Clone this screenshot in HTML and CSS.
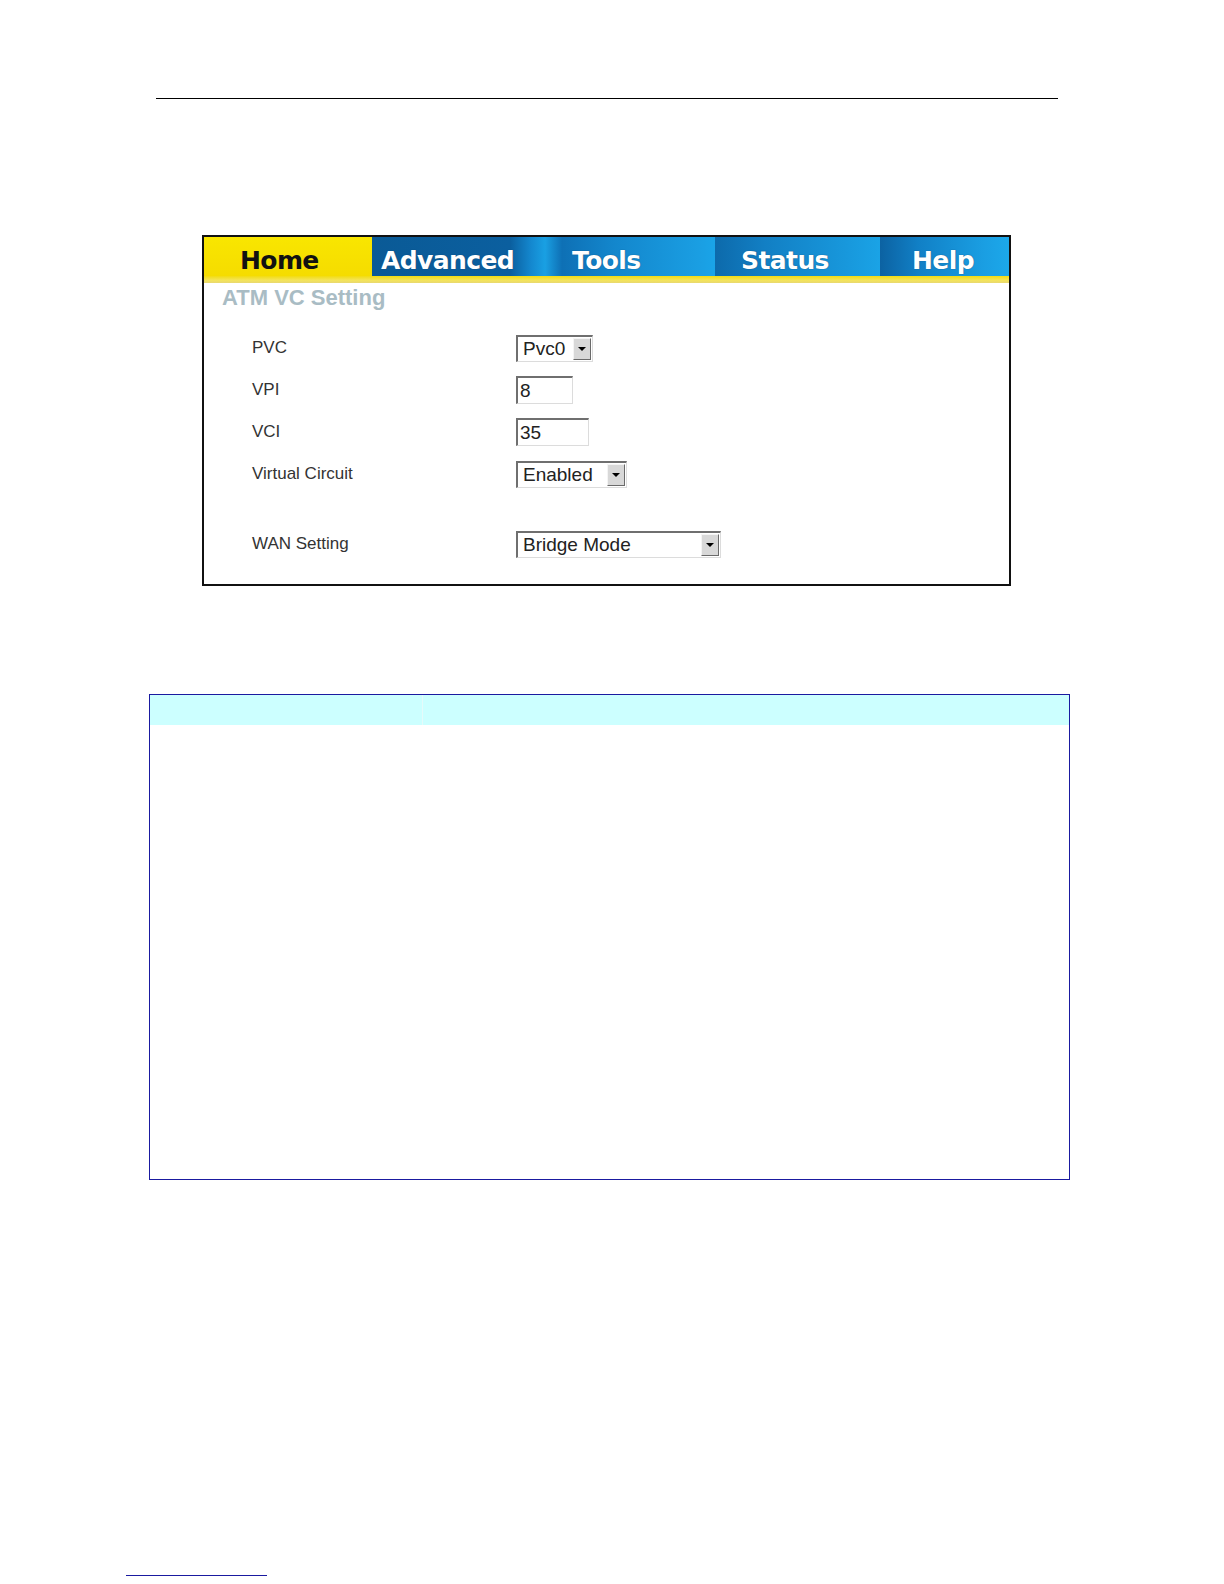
FILE: index.html
```html
<!DOCTYPE html>
<html>
<head>
<meta charset="utf-8">
<link rel="stylesheet" href="styles.css">
</head>
<body>
<div class="page">
  <div class="top-rule"></div>

  <div class="shot">
    <div class="tabbar">
      <div class="tab tab-home">Home</div>
      <div class="tab tab-adv">Advanced</div>
      <div class="tab tab-tools">Tools</div>
      <div class="tab tab-status">Status</div>
      <div class="tab tab-help">Help</div>
    </div>
    <div class="stripe"></div>
    <div class="content">
      <div class="title">ATM VC Setting</div>
      <div class="form">
        <div class="row">
          <div class="label">PVC</div>
          <div class="ctrl"><span class="select w-pvc"><span class="val">Pvc0</span><span class="arrow"></span></span></div>
        </div>
        <div class="row">
          <div class="label">VPI</div>
          <div class="ctrl"><span class="input w-vpi">8</span></div>
        </div>
        <div class="row">
          <div class="label">VCI</div>
          <div class="ctrl"><span class="input w-vci">35</span></div>
        </div>
        <div class="row">
          <div class="label">Virtual Circuit</div>
          <div class="ctrl"><span class="select w-vc"><span class="val">Enabled</span><span class="arrow"></span></span></div>
        </div>
        <div class="spacer"></div>
        <div class="row">
          <div class="label">WAN Setting</div>
          <div class="ctrl"><span class="select w-wan"><span class="val">Bridge Mode</span><span class="arrow"></span></span></div>
        </div>
      </div>
    </div>
  </div>

  <div class="table">
    <div class="thead">
      <div class="th th1"></div>
      <div class="th th2"></div>
    </div>
    <div class="tbody"></div>
  </div>

  <div class="foot-rule"></div>
</div>
</body>
</html>
```

FILE: styles.css
```css
html, body {
  margin: 0;
  padding: 0;
  background: #ffffff;
  overflow: hidden;
}
.page {
  font-family: "Liberation Sans", Arial, sans-serif;
  padding-top: 98px;
}
.top-rule {
  margin-left: 156px;
  width: 902px;
  height: 0;
  border-top: 1px solid #000;
}
.shot {
  margin-top: 136px;
  margin-left: 202px;
  width: 809px;
  height: 351px;
  border: 2px solid #111;
  box-sizing: border-box;
  background: #fff;
  display: flex;
  flex-direction: column;
}
.tabbar {
  display: flex;
  height: 39px;
  background: #f7e200;
}
.tab {
  height: 39px;
  box-sizing: border-box;
  font-family: "DejaVu Sans", Verdana, sans-serif;
  font-weight: bold;
  font-size: 25px;
  line-height: 48px;
  letter-spacing: -0.6px;
  color: #fff;
  white-space: nowrap;
  overflow: hidden;
  text-shadow: 0 0 1px #0a3f6b;
}
.tab-home {
  width: 168px;
  padding-left: 36px;
  color: #111;
  text-shadow: none;
  background: linear-gradient(#f9e600, #f5dc00);
}
.tab-adv {
  width: 173px;
  padding-left: 9px;
  background: linear-gradient(90deg, #0a5a96 0%, #0b5f9f 80%, #1488cf 92%, #19a0e3 100%);
}
.tab-tools {
  width: 170px;
  padding-left: 27px;
  background: linear-gradient(90deg, #1aa0e3 0%, #0e70b5 10%, #1386cc 40%, #1a9ee2 90%, #1aa4e8 100%);
}
.tab-status {
  width: 165px;
  padding-left: 26px;
  background: linear-gradient(90deg, #0d6aab 0%, #127fc4 30%, #1898dc 80%, #1aa3e6 100%);
}
.tab-help {
  width: 129px;
  padding-left: 32px;
  background: linear-gradient(90deg, #0c62a2 0%, #1180c6 30%, #1a9ee2 80%, #1ca8ea 100%);
}
.stripe {
  height: 7px;
  background: linear-gradient(#f2dc10, #f4e45a 60%, #e8d870);
}
.content {
  padding-left: 18px;
}
.title {
  padding-top: 3px;
  height: 44px;
  box-sizing: border-box;
  font-size: 22px;
  line-height: 24px;
  color: #a9bcc4;
  font-weight: bold;
  letter-spacing: 0;
}
.form {
  padding-left: 30px;
  display: flex;
  flex-direction: column;
}
.row {
  display: flex;
  align-items: center;
  height: 42px;
}
.spacer {
  height: 28px;
}
.label {
  width: 264px;
  font-size: 17px;
  color: #333;
}
.ctrl {
  display: flex;
  align-items: center;
}
.input, .select {
  display: flex;
  align-items: center;
  height: 28px;
  box-sizing: border-box;
  border-top: 2px solid #6f6f6f;
  border-left: 2px solid #6f6f6f;
  border-right: 1px solid #dcdcdc;
  border-bottom: 1px solid #dcdcdc;
  background: #fff;
  font-size: 19px;
  color: #222;
  padding-left: 2px;
}
.w-vpi { width: 57px; }
.w-vci { width: 73px; }
.select {
  justify-content: space-between;
  padding-right: 1px;
  height: 27px;
}
.w-pvc { width: 77px; }
.w-vc { width: 111px; }
.w-wan { width: 205px; }
.val {
  padding-left: 3px;
}
.arrow {
  width: 18px;
  height: 22px;
  box-sizing: border-box;
  background: #d8d8d8;
  border-top: 1px solid #f4f4f4;
  border-left: 1px solid #f4f4f4;
  border-right: 1px solid #6a6a6a;
  border-bottom: 1px solid #6a6a6a;
  position: relative;
}
.arrow::after {
  content: "";
  position: absolute;
  left: 4px;
  top: 8px;
  border-left: 4px solid transparent;
  border-right: 4px solid transparent;
  border-top: 4px solid #000;
}
.table {
  margin-top: 108px;
  margin-left: 149px;
  width: 921px;
  height: 486px;
  border: 1px solid #1a1aa0;
  box-sizing: border-box;
  display: flex;
  flex-direction: column;
}
.thead {
  display: flex;
  height: 30px;
  background: #ccffff;
}
.th1 {
  width: 272px;
  border-right: 1px solid #e6fafa;
}
.th2 {
  flex: 1;
}
.tbody {
  flex: 1;
}
.foot-rule {
  margin-top: 395px;
  margin-left: 126px;
  width: 141px;
  border-top: 1px solid #1a1aa0;
}
```
